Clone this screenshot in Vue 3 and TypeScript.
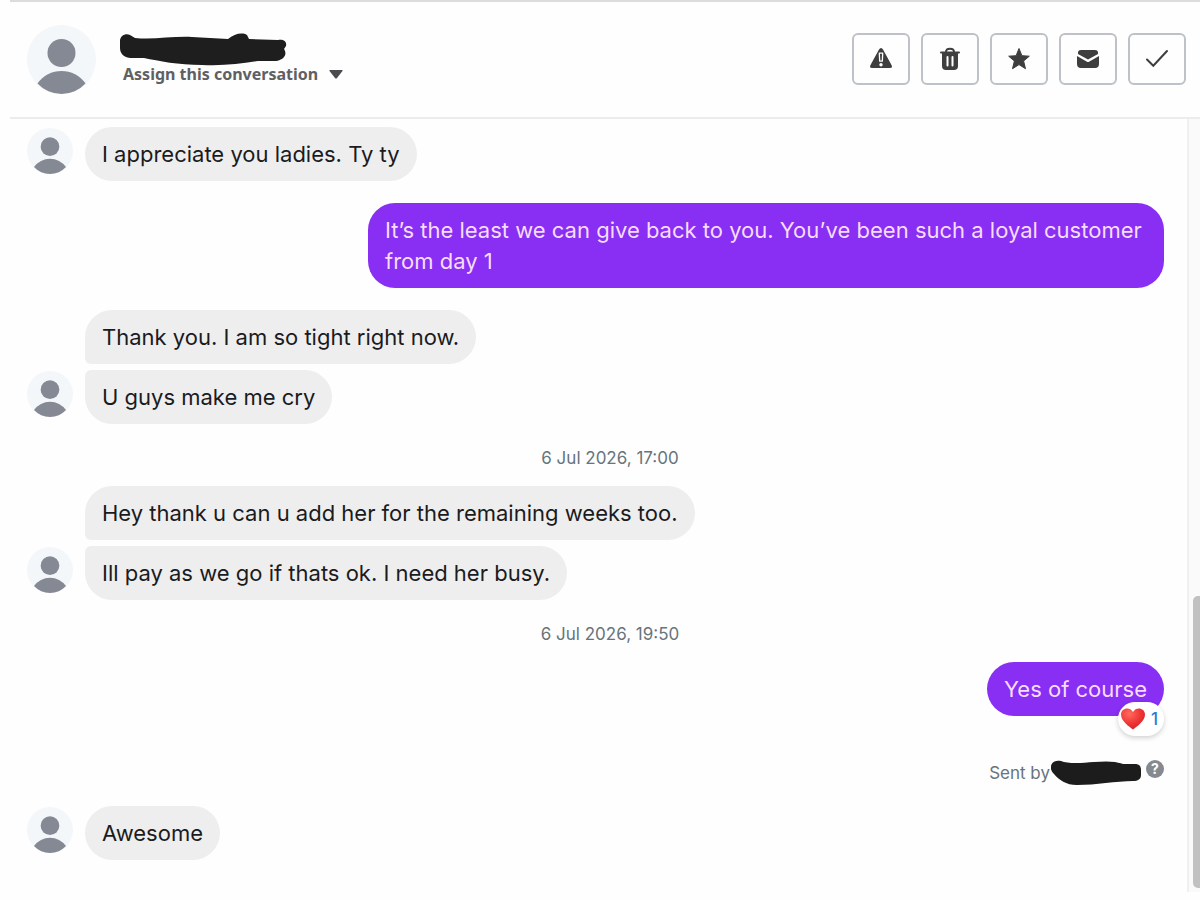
<script setup lang="ts">
interface Message {
  id: number
  text: string
  own: boolean
  avatar: boolean
  shape: 'single' | 'first' | 'last'
  stamp?: string
  hearts?: number
}

const messages: Message[] = [
  { id: 1, text: 'I appreciate you ladies. Ty ty', own: false, avatar: true, shape: 'single' },
  { id: 2, text: 'It’s the least we can give back to you. You’ve been such a loyal customer from day 1', own: true, avatar: false, shape: 'single' },
  { id: 3, text: 'Thank you. I am so tight right now.', own: false, avatar: false, shape: 'first' },
  { id: 4, text: 'U guys make me cry', own: false, avatar: true, shape: 'last' },
  { id: 5, text: 'Hey thank u can u add her for the remaining weeks too.', own: false, avatar: false, shape: 'first', stamp: '6 Jul 2026, 17:00' },
  { id: 6, text: 'Ill pay as we go if thats ok. I need her busy.', own: false, avatar: true, shape: 'last' },
  { id: 7, text: 'Yes of course', own: true, avatar: false, shape: 'single', stamp: '6 Jul 2026, 19:50', hearts: 1 },
  { id: 8, text: 'Awesome', own: false, avatar: true, shape: 'single' },
]
</script>

<template>
  <main class="inbox">
    <header class="bar">
      <svg class="avatar large" viewBox="0 0 69 69" aria-hidden="true">
        <circle cx="34.5" cy="34.5" r="34.5" fill="#f3f7fa" />
        <circle cx="34.5" cy="28" r="14" fill="#848994" />
        <path d="M10.5 58.5A29.3 29.3 0 0 1 58.5 58.5A32.7 32.7 0 0 1 10.5 58.5Z" fill="#848994" />
      </svg>
      <div class="who">
        <svg class="name-mark" viewBox="0 0 168 34" aria-hidden="true">
          <path d="M1 7C2 2 7 0 11 2L16 5C34 7 54 3 73 4L109 6C115 1 123-1 128 2L130 6L159 7C165 6 168 9 167 13L165 16C169 22 164 27 157 28L139 28C122 31 104 33 83 32C59 32 40 28 25 25L11 25C4 24 1 20 1 15Z" fill="#1e1e1e" />
        </svg>
        <button class="assign" type="button">
          Assign this conversation
          <svg width="14" height="9" viewBox="0 0 14 9" aria-hidden="true"><path d="M1 0H13Q14 0 13.5 1L8 8Q7 9 6 8L.5 1Q0 0 1 0Z" fill="#4b4c4f" /></svg>
        </button>
      </div>
      <div class="tools">
        <button type="button" aria-label="Report">
          <svg viewBox="0 0 24 24"><path d="M12 1Q13.2 1 14 2.5L22.5 18Q24 21 21 21H3Q0 21 1.5 18L10 2.5Q10.8 1 12 1Z" fill="#3e3e3f" /><path d="M10.3 6.2H13.7L13.3 14.2H10.7Z" fill="none" stroke="#fff" stroke-width="1.3" stroke-linejoin="round" /><circle cx="12" cy="17.8" r="1.7" fill="#fff" /></svg>
        </button>
        <button type="button" aria-label="Delete">
          <svg viewBox="0 0 24 24"><path d="M8 5C8 .5 16 .5 16 5" fill="none" stroke="#3e3e3f" stroke-width="2" /><path d="M3 4.5H21Q22 4.5 22 5.5T21 6.5H3Q2 6.5 2 5.5T3 4.5Z" fill="#3e3e3f" /><path d="M4 6H20V19Q20 23 16 23H8Q4 23 4 19Z" fill="#3e3e3f" /><path d="M9.5 10V18.5M14.5 10V18.5" stroke="#fff" stroke-width="2" stroke-linecap="round" /></svg>
        </button>
        <button type="button" aria-label="Star">
          <svg viewBox="0 0 24 24"><path d="M12 1.5L14.9 8.7L22.3 9.2L16.6 14L18.5 21.7L12 17.6L5.5 21.7L7.4 14L1.7 9.2L9.1 8.7Z" fill="#3e3e3f" stroke="#3e3e3f" stroke-linejoin="round" /></svg>
        </button>
        <button type="button" aria-label="Mark as unread">
          <svg viewBox="0 0 24 24"><path d="M2 7Q1.5 3 5 3H19Q22.5 3 22 7L12 12.5Z" fill="#3e3e3f" /><path d="M1 9L11 14.7Q12 15.3 13 14.7L23 9V17Q23 21 19 21H5Q1 21 1 17Z" fill="#3e3e3f" /></svg>
        </button>
        <button type="button" aria-label="Mark as done">
          <svg viewBox="0 0 24 24"><path d="M2 12.5L8.3 18.8L22 4" fill="none" stroke="#3e3e3f" stroke-width="2" stroke-linecap="round" /></svg>
        </button>
      </div>
    </header>

    <div class="body">
      <section class="thread" aria-label="Messages">
        <template v-for="m in messages" :key="m.id">
          <time v-if="m.stamp" class="stamp">{{ m.stamp }}</time>
          <div class="row" :class="[m.shape, { own: m.own }]">
            <div v-if="!m.own" class="seat">
              <svg v-if="m.avatar" class="avatar" viewBox="0 0 69 69" aria-hidden="true">
                <circle cx="34.5" cy="34.5" r="34.5" fill="#f3f7fa" />
                <circle cx="34.5" cy="28" r="14" fill="#848994" />
                <path d="M10.5 58.5A29.3 29.3 0 0 1 58.5 58.5A32.7 32.7 0 0 1 10.5 58.5Z" fill="#848994" />
              </svg>
            </div>
            <div class="bubble">
              {{ m.text }}
              <button v-if="m.hearts" class="reaction" type="button" aria-label="Heart reactions">
                <svg width="24" height="22" viewBox="0 0 24 22" aria-hidden="true">
                  <defs>
                    <radialGradient id="heart" cx="35%" cy="25%" r="80%">
                      <stop offset="0" stop-color="#ff6a5e" />
                      <stop offset=".6" stop-color="#ee3434" />
                      <stop offset="1" stop-color="#d5202a" />
                    </radialGradient>
                  </defs>
                  <path d="M12 21.5C8 18.5 0 13 0 6.5C0 .5 8.5-2 12 4C15.5-2 24 .5 24 6.5C24 13 16 18.5 12 21.5Z" fill="url(#heart)" />
                </svg>
                <span>{{ m.hearts }}</span>
              </button>
            </div>
          </div>
          <div v-if="m.hearts" class="sender">
            <span>Sent by</span>
            <svg class="sender-mark" viewBox="0 0 90 26" aria-hidden="true">
              <path d="M0 6C1 1 6 0 10 1C17 4 31 3 43 2C55 1 64 1 72 4L84 4C88 4 90 6 90 10V15C90 19 87 21 82 21C65 21 45 25 26 25C15 25 8 20 3 14Q-1 10 0 6Z" fill="#1c1c1c" />
            </svg>
            <button class="help" type="button" aria-label="Help">?</button>
          </div>
        </template>
      </section>
      <div class="track"><div class="thumb"></div></div>
    </div>
  </main>
</template>

<style>
body {
  margin: 0;
  background: #fefefe;
}
</style>

<style scoped>
.inbox {
  display: flex;
  flex-direction: column;
  box-sizing: border-box;
  min-height: 100vh;
  padding: 0 0 8px 10px;
  font-family: Inter, "Liberation Sans", sans-serif;
  background: #fefefe;
}
button {
  margin: 0;
  padding: 0;
  border: 0;
  font: inherit;
  background: none;
  cursor: pointer;
}
svg {
  display: block;
}
.bar {
  display: flex;
  align-items: flex-start;
  box-sizing: border-box;
  min-height: 119px;
  padding: 23px 14px 22px 17px;
  border-top: 2px solid #dcdcdd;
  border-bottom: 2px solid #ececed;
}
.avatar {
  width: 46px;
  height: 46px;
  flex: none;
}
.avatar.large {
  width: 69px;
  height: 69px;
}
.who {
  padding: 8px 0 0 23px;
}
.name-mark {
  width: 168px;
  height: 34px;
}
.assign {
  display: flex;
  align-items: center;
  gap: 11px;
  margin: -4px 0 0 4px;
  font-family: "Noto Sans", sans-serif;
  font-size: 16px;
  font-weight: 700;
  line-height: 22px;
  color: #5f6063;
}
.tools {
  display: flex;
  gap: 11px;
  margin-left: auto;
  padding-top: 8px;
}
.tools button {
  display: flex;
  align-items: center;
  justify-content: center;
  box-sizing: border-box;
  width: 58px;
  height: 52px;
  border: 2px solid #bcc2c7;
  border-radius: 6px;
}
.tools svg {
  width: 24px;
  height: 24px;
}
.body {
  display: flex;
  flex: 1;
}
.thread {
  flex: 1;
  padding: 8px 23px 0 17px;
}
.row {
  display: flex;
  align-items: flex-end;
  margin-bottom: 22px;
}
.row.first {
  margin-bottom: 6px;
}
.row.own {
  justify-content: flex-end;
}
.seat {
  width: 46px;
  margin: 0 12px 7px 0;
  flex: none;
}
.bubble {
  position: relative;
  box-sizing: border-box;
  max-width: 796px;
  padding: 12px 17px 11px;
  border-radius: 27px;
  font-size: 22px;
  line-height: 31px;
  color: #1b1b1d;
  background: #eeeeef;
}
.first .bubble {
  border-bottom-left-radius: 6px;
}
.last .bubble {
  border-top-left-radius: 6px;
}
.own .bubble {
  color: #f6dcfd;
  background: #892ef3;
}
.reaction {
  position: absolute;
  right: 0;
  bottom: -20px;
  display: flex;
  align-items: center;
  gap: 6px;
  height: 34px;
  padding: 0 6px 0 3px;
  border-radius: 17px;
  font-size: 17px;
  font-weight: 500;
  color: #2b7bd3;
  background: #fff;
  box-shadow: 0 2px 5px rgba(0, 0, 0, 0.18);
}
.stamp {
  display: block;
  padding: 0 0 16px 29px;
  font-size: 17px;
  line-height: 24px;
  text-align: center;
  color: #67747c;
}
.sender {
  display: flex;
  align-items: center;
  justify-content: flex-end;
  padding: 22px 0 20px;
  font-size: 17px;
  line-height: 26px;
  color: #67747c;
}
.sender-mark {
  width: 90px;
  height: 26px;
  margin: 0 5px 0 1px;
}
.help {
  align-self: flex-start;
  width: 18px;
  height: 18px;
  border-radius: 50%;
  font-size: 14px;
  font-weight: 700;
  line-height: 18px;
  color: #fff;
  background: #858a90;
}
.track {
  display: flex;
  flex-direction: column;
  justify-content: flex-end;
  box-sizing: border-box;
  width: 13px;
  padding: 0 0 4px 4px;
  border-left: 2px solid #f0f0f1;
  background: #fafafa;
}
.thumb {
  height: 38%;
  border-radius: 5px 0 0 5px;
  background: #c1c1c2;
}
</style>
